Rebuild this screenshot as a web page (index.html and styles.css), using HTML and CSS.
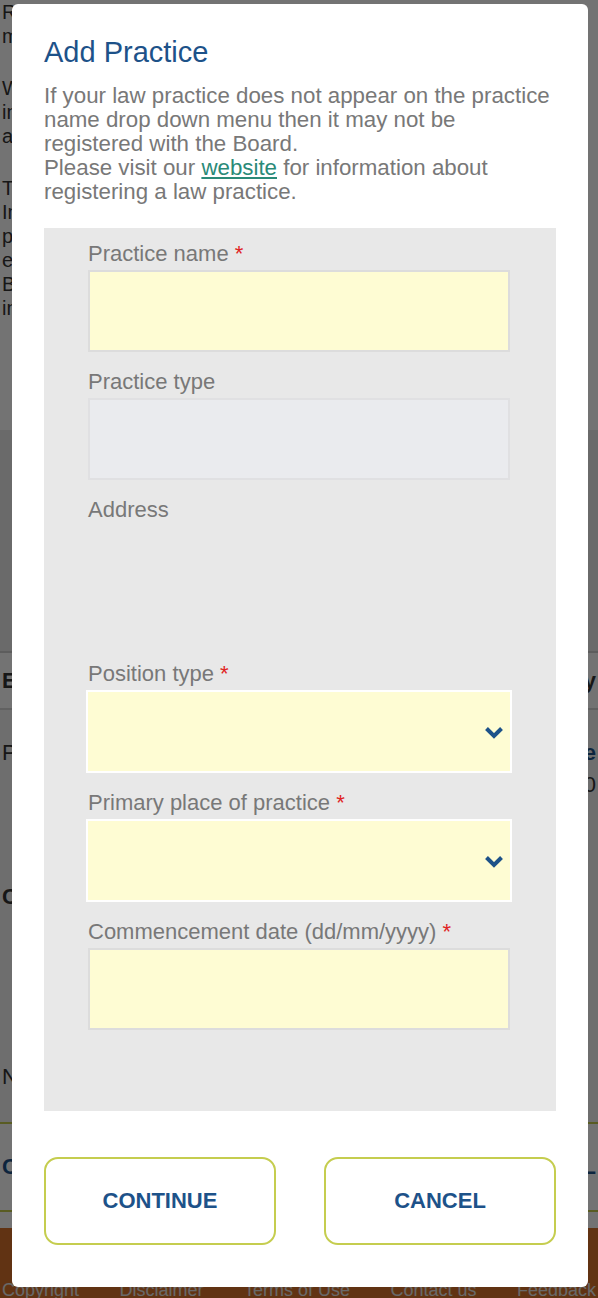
FILE: index.html
```html
<!DOCTYPE html>
<html lang="en">
<head>
<meta charset="utf-8">
<title>Add Practice</title>
<link rel="stylesheet" href="styles.css">
</head>
<body>
<div class="page">
  <section class="page-intro">
    <p>Received notifications are processed by the Board. Practitioners must notify:</p>
    <p class="gap">Where the practitioner holds a current certificate, they should include all details of the law practice, including the practice name and address.</p>
    <p class="gap">The practice details should be updated before the renewal is due. Include the details of your current employer and any other law practices where you are employed, including the place you work, evidence of the practice type and your position type. Contact the Board if you are unsure which details to provide here. More information is in the guidance notes.</p>
  </section>
  <section class="page-muted"></section>
  <nav class="page-tabs"><span class="tab">Edit</span><span class="tab">Summary</span></nav>
  <section class="page-content">
    <div class="content-row"><span>Position</span><span class="content-right">Date</span></div>
    <div class="content-row"><span></span><span class="content-right muted">01/01/2020</span></div>
    <div class="content-row tall"><span class="bold">Commencement</span></div>
    <div class="content-row"><span>Notification</span></div>
  </section>
  <section class="page-buttons"><span class="bg-btn">CONTINUE</span><span class="bg-btn">CANCEL</span></section>
  <footer class="page-footer"><span>Copyright</span><span>Disclaimer</span><span>Terms of Use</span><span>Contact us</span><span>Feedback</span></footer>
</div>

<div class="overlay"></div>

<div class="modal" role="dialog" aria-labelledby="modal-title">
  <h2 class="modal-title" id="modal-title">Add Practice</h2>
  <p class="intro">If your law practice does not appear on the practice name drop down menu then it may not be registered with the Board.<br>Please visit our <a href="#" class="link">website</a> for information about registering a law practice.</p>

  <form class="panel">
    <div class="field">
      <label class="label">Practice name <span class="req">*</span></label>
      <div class="input"></div>
    </div>
    <div class="field">
      <label class="label">Practice type</label>
      <div class="input input-readonly"></div>
    </div>
    <div class="field">
      <label class="label">Address</label>
      <div class="address"></div>
    </div>
    <div class="field">
      <label class="label">Position type <span class="req">*</span></label>
      <div class="select">
        <svg class="chevron" width="20" height="13" viewBox="0 0 20 13"><path d="M2.5 2.5 L10 10 L17.5 2.5" fill="none" stroke="#1d5289" stroke-width="4"/></svg>
      </div>
    </div>
    <div class="field">
      <label class="label">Primary place of practice <span class="req">*</span></label>
      <div class="select">
        <svg class="chevron" width="20" height="13" viewBox="0 0 20 13"><path d="M2.5 2.5 L10 10 L17.5 2.5" fill="none" stroke="#1d5289" stroke-width="4"/></svg>
      </div>
    </div>
    <div class="field last">
      <label class="label">Commencement date (dd/mm/yyyy) <span class="req">*</span></label>
      <div class="input"></div>
    </div>
  </form>

  <div class="actions">
    <button type="button" class="btn">CONTINUE</button>
    <button type="button" class="btn">CANCEL</button>
  </div>
</div>
</body>
</html>
```

FILE: styles.css
```css
* { box-sizing: border-box; }

html, body {
  margin: 0;
  padding: 0;
}

body {
  font-family: "Liberation Sans", Arial, sans-serif;
  background: #ffffff;
  width: 598px;
  height: 1298px;
  overflow: hidden;
  position: relative;
}

/* ---------- background page ---------- */
.page {
  width: 598px;
  height: 1298px;
  overflow: hidden;
  color: #333333;
  font-size: 20px;
}

.page-intro {
  height: 430px;
  background: #ffffff;
  padding: 0 2px;
}

.page-intro p {
  margin: 0;
  line-height: 24px;
}

.page-intro p.gap { margin-top: 28px; }

.page-muted {
  height: 221px;
  background: #ececec;
}

.page-tabs {
  height: 59px;
  border-top: 2px solid #cfcfcf;
  border-bottom: 2px solid #d8d8d8;
  background: #ffffff;
  display: flex;
  align-items: center;
  justify-content: space-between;
  padding: 0 2px;
  font-weight: bold;
  font-size: 22px;
}

.page-content {
  height: 412px;
  background: #f4f4f4;
  padding: 30px 2px 0;
}

.content-row {
  display: flex;
  justify-content: space-between;
  height: 32px;
  font-size: 22px;
}

.content-right { color: #1d5289; font-weight: bold; }
.content-right.muted { color: #333; font-weight: normal; }
.content-row.tall { margin-top: 80px; height: 180px; font-weight: bold; }

.page-buttons {
  height: 90px;
  border-top: 2px solid #c5cd4f;
  border-bottom: 2px solid #c5cd4f;
  display: flex;
  justify-content: space-between;
  align-items: center;
  padding: 0 2px;
  background: #ffffff;
}

.bg-btn {
  color: #1d5289;
  font-weight: bold;
  font-size: 22px;
}

.page-footer {
  margin-top: 16px;
  height: 72px;
  background: #d7722c;
  display: flex;
  align-items: flex-end;
  justify-content: space-between;
  padding: 0 2px;
  color: #e8e8e8;
  font-size: 18px;
  line-height: 20px;
}

/* ---------- overlay ---------- */
.overlay {
  position: absolute;
  inset: 0;
  background: rgba(0, 0, 0, 0.55);
}

/* ---------- modal ---------- */
.modal {
  position: absolute;
  top: 4px;
  left: 12px;
  width: 576px;
  background: #ffffff;
  border-radius: 6px;
  padding: 31px 32px 42px;
}

.modal-title {
  margin: 0 0 15px;
  font-size: 29px;
  line-height: 34px;
  font-weight: normal;
  color: #1d5289;
}

.intro {
  margin: 0 0 24px;
  font-size: 22.3px;
  line-height: 24px;
  color: #787878;
}

.link {
  color: #2a8a78;
  text-decoration: underline;
  text-underline-offset: 2px;
}

.panel {
  background: #e8e8e8;
  padding: 14px 44px 81px;
}

.field { margin-bottom: 18px; }
.field.last { margin-bottom: 0; }

.label {
  display: block;
  font-size: 22px;
  line-height: 24px;
  color: #787878;
  margin-bottom: 4px;
}

.req { color: #e02424; }

.input {
  width: 422px;
  height: 82px;
  border: 2px solid #dcdcdc;
  background: #fefcd3;
}

.input-readonly {
  background: #eaebee;
  border-color: #e0e0e2;
}

.address { height: 118px; }

.select {
  width: 426px;
  height: 83px;
  margin-left: -2px;
  border: 2px solid #ffffff;
  background: #fefcd3;
  display: flex;
  align-items: center;
  justify-content: flex-end;
  padding-right: 6px;
}

.chevron { display: block; margin-top: 1px; }

.actions {
  margin-top: 46px;
  display: flex;
  justify-content: space-between;
}

.btn {
  width: 232px;
  height: 88px;
  border: 2px solid #c5cd4f;
  border-radius: 14px;
  background: #ffffff;
  color: #1d5289;
  font-family: "Liberation Sans", Arial, sans-serif;
  font-weight: bold;
  font-size: 22px;
  padding: 0;
}
```
